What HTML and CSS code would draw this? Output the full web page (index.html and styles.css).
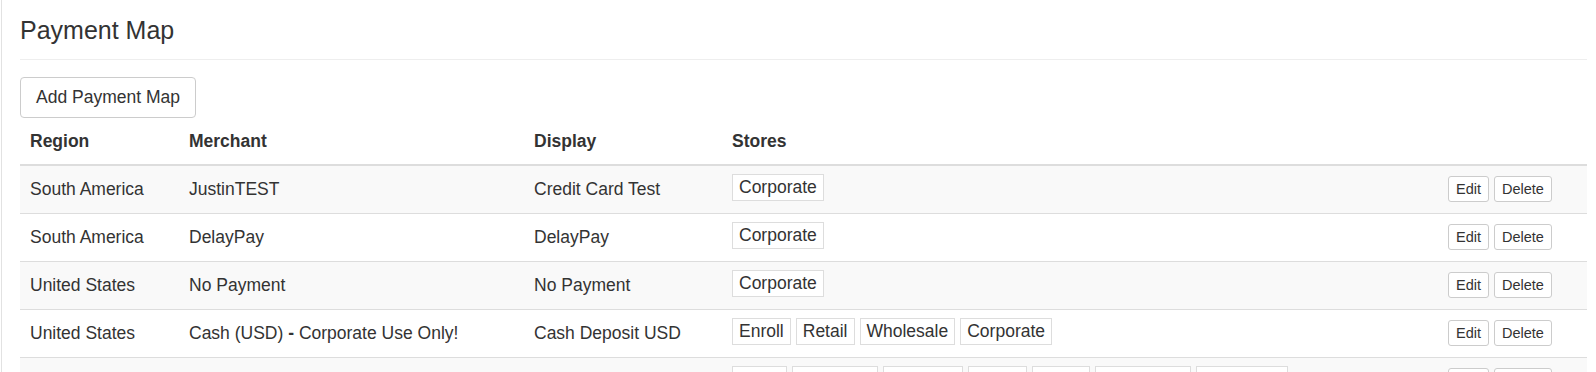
FILE: index.html
```html
<!DOCTYPE html>
<html lang="en">
<head>
<meta charset="utf-8">
<title>Payment Map</title>
<link rel="stylesheet" href="styles.css">
</head>
<body>
<div class="page">
  <div class="page-header">
    <h3 class="title">Payment Map</h3>
  </div>
  <div class="toolbar">
    <button class="btn btn-default" type="button">Add Payment Map</button>
  </div>
  <table class="grid">
    <colgroup>
      <col class="c-region">
      <col class="c-merchant">
      <col class="c-display">
      <col class="c-stores">
      <col class="c-actions">
    </colgroup>
    <thead>
      <tr>
        <th>Region</th>
        <th>Merchant</th>
        <th>Display</th>
        <th>Stores</th>
        <th></th>
      </tr>
    </thead>
    <tbody>
      <tr>
        <td>South America</td>
        <td>JustinTEST</td>
        <td>Credit Card Test</td>
        <td><div class="tags"><span class="tag">Corporate</span></div></td>
        <td><div class="actions"><button class="btn-sm">Edit</button><button class="btn-sm">Delete</button></div></td>
      </tr>
      <tr>
        <td>South America</td>
        <td>DelayPay</td>
        <td>DelayPay</td>
        <td><div class="tags"><span class="tag">Corporate</span></div></td>
        <td><div class="actions"><button class="btn-sm">Edit</button><button class="btn-sm">Delete</button></div></td>
      </tr>
      <tr>
        <td>United States</td>
        <td>No Payment</td>
        <td>No Payment</td>
        <td><div class="tags"><span class="tag">Corporate</span></div></td>
        <td><div class="actions"><button class="btn-sm">Edit</button><button class="btn-sm">Delete</button></div></td>
      </tr>
      <tr>
        <td>United States</td>
        <td>Cash (USD) <b>-</b> Corporate Use Only!</td>
        <td>Cash Deposit USD</td>
        <td><div class="tags"><span class="tag">Enroll</span><span class="tag">Retail</span><span class="tag">Wholesale</span><span class="tag">Corporate</span></div></td>
        <td><div class="actions"><button class="btn-sm">Edit</button><button class="btn-sm">Delete</button></div></td>
      </tr>
      <tr>
        <td>United States</td>
        <td>Credit Card (USD)</td>
        <td>Credit Card</td>
        <td><div class="tags"><span class="tag">Party</span><span class="tag">Promoter</span><span class="tag">Partners</span><span class="tag">Enroll</span><span class="tag">Retail</span><span class="tag">Wholesale</span><span class="tag">Corporate</span></div></td>
        <td><div class="actions"><button class="btn-sm">Edit</button><button class="btn-sm">Delete</button></div></td>
      </tr>
    </tbody>
  </table>
</div>
</body>
</html>
```

FILE: styles.css
```css
* { box-sizing: border-box; }

html, body {
  margin: 0;
  padding: 0;
  background: #fff;
}

body {
  font-family: "Liberation Sans", Arial, sans-serif;
  font-size: 17.5px;
  line-height: 25px;
  color: #333;
}

.page {
  margin-left: 1px;
  border-left: 1px solid #e2e2e2;
  padding: 0 9px 0 18px;
}

.page-header {
  padding: 17px 0 14px;
  border-bottom: 1px solid #eee;
}

.title {
  margin: 0;
  font-size: 25px;
  font-weight: 400;
  line-height: 27.5px;
  color: #333;
}

.toolbar {
  margin-top: 17px;
  margin-bottom: 1px;
}

.btn {
  font-family: inherit;
  font-size: 17.5px;
  line-height: 25px;
  color: #333;
  background: #fff;
  border: 1px solid #ccc;
  border-radius: 4px;
  padding: 7px 15px;
  cursor: pointer;
}

.grid {
  width: 100%;
  border-collapse: collapse;
  table-layout: fixed;
}

.c-region { width: 159px; }
.c-merchant { width: 345px; }
.c-display { width: 198px; }
.c-stores { width: 716px; }
.c-actions { width: 149px; }

.grid th {
  text-align: left;
  font-weight: 700;
  padding: 10px 10px 10px;
  border-bottom: 2px solid #ddd;
  vertical-align: bottom;
}

.grid td {
  padding: 8px 10px;
  border-top: 1px solid #ddd;
  vertical-align: middle;
  white-space: nowrap;
}

.grid tbody tr:first-child td { border-top: 0; }

.grid tbody tr:nth-child(odd) td { background: #f9f9f9; }

.tags {
  display: flex;
  flex-wrap: wrap;
  gap: 5px;
  padding-bottom: 4px;
}

.tag {
  display: inline-block;
  background: #fff;
  border: 1px solid #ddd;
  padding: 3px 6px;
  line-height: 19px;
  font-size: 17.5px;
  color: #333;
}

.actions {
  display: flex;
  gap: 5px;
}

.btn-sm {
  font-family: inherit;
  font-size: 14.5px;
  line-height: 18px;
  color: #333;
  background: #fff;
  border: 1px solid #ccc;
  border-radius: 3px;
  padding: 3px 7px;
  cursor: pointer;
}
```
